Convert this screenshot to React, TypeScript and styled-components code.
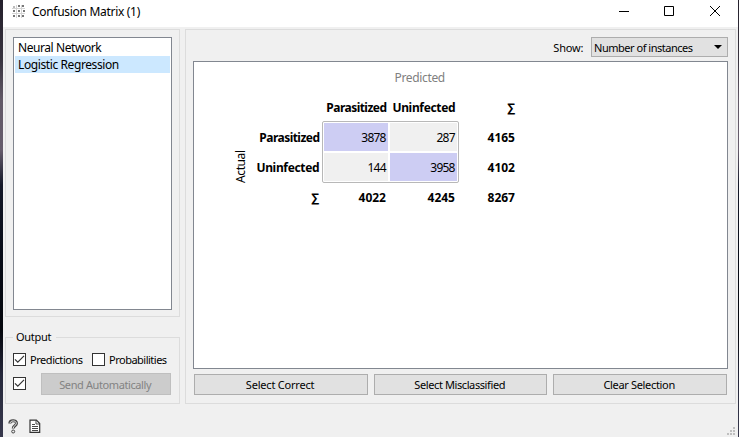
import React from 'react';
import styled, { createGlobalStyle } from 'styled-components';

const GlobalStyle = createGlobalStyle`
  * { box-sizing: border-box; }
  html, body { margin: 0; padding: 0; overflow: hidden; }
  body { font-family: "Noto Sans", "Open Sans", sans-serif; font-size: 12px; color: #000; }
`;

const Desktop = styled.div`
  width: 739px;
  height: 437px;
  padding: 0 1px 0 3px;
  background: linear-gradient(#24202c 0, #39343f 60px, #625967 100px, #665c6c 150px, #141828 185px, #080c18 250px, #05070d 330px, #25273a 375px, #38394d 437px);
`;

const Window = styled.main`
  height: 437px;
  display: flex;
  flex-direction: column;
  background: #f0f0f0;
`;

const TitleBar = styled.header`
  height: 27px;
  flex: none;
  display: flex;
  align-items: flex-start;
  background: #fff;
  padding-left: 9px;
`;

const Text = styled.span<{ $ls?: number; $bold?: boolean; $size?: number }>`
  display: block;
  white-space: nowrap;
  font-size: ${p => p.$size ?? 12}px;
  line-height: 16px;
  font-weight: ${p => (p.$bold ? 700 : 400)};
  letter-spacing: ${p => p.$ls ?? 0}px;
  margin-right: ${p => p.$ls ?? 0}px;
`;

const Title = styled(Text)`
  flex: 1;
  margin: 4px 0 0 7px;
`;

const TitleIcon = styled.svg`
  width: 13px;
  height: 13px;
  margin-top: 5px;
`;

const WindowControls = styled.svg`
  width: 112px;
  height: 22px;
  margin-right: 11px;
`;

const Body = styled.div`
  flex: none;
  height: 376px;
  display: grid;
  grid-template-columns: 175px 551px;
  column-gap: 5px;
  padding: 2px 0 0 2px;
`;

const SideBar = styled.div`
  display: flex;
  flex-direction: column;
  gap: 20px;
`;

const Panel = styled.section`
  border: 1px solid #dcdcdc;
  padding: 7px;
`;

const ListPanel = styled(Panel)`
  height: 288px;
`;

const List = styled.ul`
  height: 273px;
  width: 159px;
  margin: 0;
  padding: 1px;
  list-style: none;
  background: #fff;
  border: 1px solid #828790;
`;

const ListItem = styled.li<{ $selected?: boolean }>`
  height: 17px;
  padding: 1px 0 0 3px;
  background: ${p => (p.$selected ? '#cce8ff' : 'transparent')};
`;

const OutputGroup = styled.fieldset`
  height: 76px;
  min-width: 0;
  margin: -9px 0 0;
  padding: 0 7px;
  border: 1px solid #dcdcdc;
`;

const Legend = styled.legend`
  height: 18px;
  padding: 1px 5px 0 3px;
`;

const Options = styled.div`
  display: flex;
  align-items: center;
  height: 20px;
  margin-top: 3px;
`;

const CheckBox = styled.svg`
  flex: none;
  width: 13px;
  height: 13px;
`;

const OptionLabel = styled(Text)`
  width: 62px;
  margin: 1px 0 0 4px;
`;

const SendRow = styled.div`
  display: flex;
  align-items: center;
  gap: 15px;
  height: 22px;
  margin-top: 3px;
`;

const Button = styled.button`
  display: flex;
  align-items: center;
  justify-content: center;
  height: 21px;
  padding: 0 2px 0 0;
  font: inherit;
  color: #000;
  background: #e1e1e1;
  border: 1px solid #adadad;
`;

const SendButton = styled(Button)`
  width: 130px;
  height: 22px;
  margin-top: 1px;
  padding-top: 2px;
  color: #838383;
  background: #ccc;
  border-color: #bfbfbf;
`;

const MatrixPanel = styled(Panel)`
  display: flex;
  flex-direction: column;
`;

const ShowRow = styled.div`
  display: flex;
  justify-content: flex-end;
  align-items: center;
  gap: 8px;
  height: 20px;
`;

const ShowLabel = styled(Text)`
  padding-top: 1px;
`;

const Select = styled.div`
  display: flex;
  align-items: center;
  justify-content: space-between;
  width: 137px;
  height: 20px;
  padding: 1px 5px 0 2px;
  background: #e1e1e1;
  border: 1px solid #adadad;
`;

const Arrow = styled.svg`
  width: 8px;
  height: 4px;
  margin-bottom: 1px;
`;

const Canvas = styled.div`
  width: 535px;
  height: 308px;
  margin-top: 4px;
  background: #fff;
  border: 1px solid #828790;
  display: grid;
  grid-template-columns: 37px 20px 71px 137px 56px;
  grid-template-rows: 31px 28px 62px 28px;
`;

const PredictedHead = styled.div`
  grid-area: 1 / 4;
  display: flex;
  justify-content: center;
  align-items: center;
  padding: 1px 0 0 58px;
  color: #808080;
`;

const ActualHead = styled.div`
  grid-area: 3 / 2;
  display: flex;
  align-items: center;
  justify-content: flex-start;
  writing-mode: vertical-rl;
  transform: rotate(180deg);
`;

const Columns = styled.div<{ $area: string }>`
  grid-area: ${p => p.$area};
  display: grid;
  grid-template-columns: 64px 69px;
  align-items: center;
  justify-items: end;
  padding: 2px 4px 0 0;
`;

const Stack = styled.div<{ $area: string }>`
  grid-area: ${p => p.$area};
  display: grid;
  grid-auto-rows: 30px;
  align-content: center;
  align-items: center;
  justify-items: end;
  padding: 2px 0 0;
`;

const RowLabels = styled(Stack)`
  padding-right: 3px;
`;

const CellFrame = styled.div`
  grid-area: 3 / 4;
  display: grid;
  grid-template-columns: 64px 67px;
  grid-template-rows: 28px 28px;
  gap: 2px;
  padding: 1px;
  border: 1px solid #b8b8b8;
  border-radius: 2px;
`;

const Cell = styled.div<{ $hit?: boolean }>`
  display: flex;
  align-items: center;
  justify-content: flex-end;
  padding: 2px 3px 0 0;
  background: ${p => (p.$hit ? '#cdcdf3' : '#f0f0f0')};
`;

const Actions = styled.div`
  display: grid;
  grid-template-columns: 174px 173px 174px;
  gap: 6px;
  margin: 5px 0 0 1px;
`;

const StatusBar = styled.footer`
  flex: 1;
  display: flex;
  align-items: flex-start;
  padding: 16px 2px 0 5px;
`;

const StatusIcon = styled.svg`
  width: 12px;
  height: 15px;
  margin-right: 9px;
`;

const Grip = styled.svg`
  width: 9px;
  height: 9px;
  margin: 8px 0 0 auto;
`;

function Check({ checked }: { checked?: boolean }) {
  return (
    <CheckBox viewBox="0 0 13 13" role="checkbox" aria-checked={!!checked}>
      <rect x=".5" y=".5" width="12" height="12" fill="#fff" stroke="#333" />
      {checked && <path d="M2 6.3 4.8 9.1 11 2.9" fill="none" stroke="#333" strokeWidth="1.2" />}
    </CheckBox>
  );
}

const gripDots = [[6, 0], [3, 3], [6, 3], [0, 6], [3, 6], [6, 6]];

export default function App() {
  return (
    <>
      <GlobalStyle />
      <Desktop>
        <Window>
          <TitleBar>
            <TitleIcon viewBox="0 0 13 13">
              <path d="M4.5 0v13M9.5 0v13M0 3.5h13M0 8.5h13" stroke="#d4d4d4" />
              <path d="M1 6h2M6 1h2M10 1h2M6 6h2M11 6h2M1 11h2M6 11h2M10 11h2" stroke="#777" strokeWidth="2" />
              <path d="M1 2h2" stroke="#bbb" strokeWidth="2" />
            </TitleIcon>
            <Title $ls={-0.3}>Confusion Matrix (1)</Title>
            <WindowControls viewBox="0 0 112 22" fill="none" stroke="#000">
              <path d="M4 11.5h10M49.5 6.5h9v9h-9zM95 6l10 10M105 6 95 16" />
            </WindowControls>
          </TitleBar>
          <Body>
            <SideBar>
              <ListPanel>
                <List>
                  <ListItem><Text $ls={-0.43}>Neural Network</Text></ListItem>
                  <ListItem $selected><Text $ls={-0.4}>Logistic Regression</Text></ListItem>
                </List>
              </ListPanel>
              <OutputGroup>
                <Legend><Text $size={11} $ls={-0.3}>Output</Text></Legend>
                <Options>
                  <Check checked />
                  <OptionLabel $size={11} $ls={-0.45}>Predictions</OptionLabel>
                  <Check />
                  <OptionLabel $size={11} $ls={-0.5}>Probabilities</OptionLabel>
                </Options>
                <SendRow>
                  <Check checked />
                  <SendButton disabled><Text $size={11} $ls={-0.4}>Send Automatically</Text></SendButton>
                </SendRow>
              </OutputGroup>
            </SideBar>
            <MatrixPanel>
              <ShowRow>
                <ShowLabel $size={11} $ls={-0.2}>Show:</ShowLabel>
                <Select>
                  <Text $size={11} $ls={-0.48}>Number of instances</Text>
                  <Arrow viewBox="0 0 8 4"><path d="M0 0h8L4 4z" /></Arrow>
                </Select>
              </ShowRow>
              <Canvas>
                <PredictedHead><Text $ls={-0.35}>Predicted</Text></PredictedHead>
                <Columns $area="2 / 4"><Text $bold $ls={-0.53}>Parasitized</Text><Text $bold $ls={-0.33}>Uninfected</Text></Columns>
                <Stack $area="2 / 5"><Text $bold>∑</Text></Stack>
                <ActualHead><Text $ls={-0.4}>Actual</Text></ActualHead>
                <RowLabels $area="3 / 3"><Text $bold $ls={-0.53}>Parasitized</Text><Text $bold $ls={-0.33}>Uninfected</Text></RowLabels>
                <CellFrame>
                  <Cell $hit><Text $ls={-0.75}>3878</Text></Cell>
                  <Cell><Text $ls={-0.75}>287</Text></Cell>
                  <Cell><Text $ls={-0.75}>144</Text></Cell>
                  <Cell $hit><Text $ls={-0.75}>3958</Text></Cell>
                </CellFrame>
                <Stack $area="3 / 5"><Text $bold>4165</Text><Text $bold>4102</Text></Stack>
                <RowLabels $area="4 / 3"><Text $bold>∑</Text></RowLabels>
                <Columns $area="4 / 4"><Text $bold>4022</Text><Text $bold>4245</Text></Columns>
                <Stack $area="4 / 5"><Text $bold>8267</Text></Stack>
              </Canvas>
              <Actions>
                <Button><Text $size={11} $ls={-0.2}>Select Correct</Text></Button>
                <Button><Text $size={11} $ls={-0.4}>Select Misclassified</Text></Button>
                <Button><Text $size={11} $ls={-0.33}>Clear Selection</Text></Button>
              </Actions>
            </MatrixPanel>
          </Body>
          <StatusBar>
            <StatusIcon viewBox="0 0 12 15" fill="none">
              <path d="M1.8 4.5C1.8 .8 8.5.8 8.5 4.3 8.5 7 5.2 6.6 5.2 9.5" stroke="#444" strokeWidth="3" />
              <path d="M2 4.2C2.3 1.2 8.3 1.1 8.3 4.3 8.3 6.8 5.2 6.6 5.2 9.2" stroke="#eee" strokeWidth="1" />
              <circle cx="5.2" cy="12.5" r="1.5" fill="#eee" stroke="#444" />
            </StatusIcon>
            <StatusIcon viewBox="0 0 12 15" fill="none" stroke="#333">
              <path d="M1 1.2h6.4l3.3 3.3v8.8H1z" fill="#fff" strokeWidth="1.2" />
              <path d="M7 1.5V5h3.5M3 5.5h3M3 7.5h6M3 9.5h6M3 11.5h6" strokeWidth=".9" />
            </StatusIcon>
            <Grip viewBox="0 0 9 9" fill="#bfbfbf">
              {gripDots.map(([x, y]) => <rect key={`${x}-${y}`} x={x} y={y} width="2" height="2" />)}
            </Grip>
          </StatusBar>
        </Window>
      </Desktop>
    </>
  );
}
